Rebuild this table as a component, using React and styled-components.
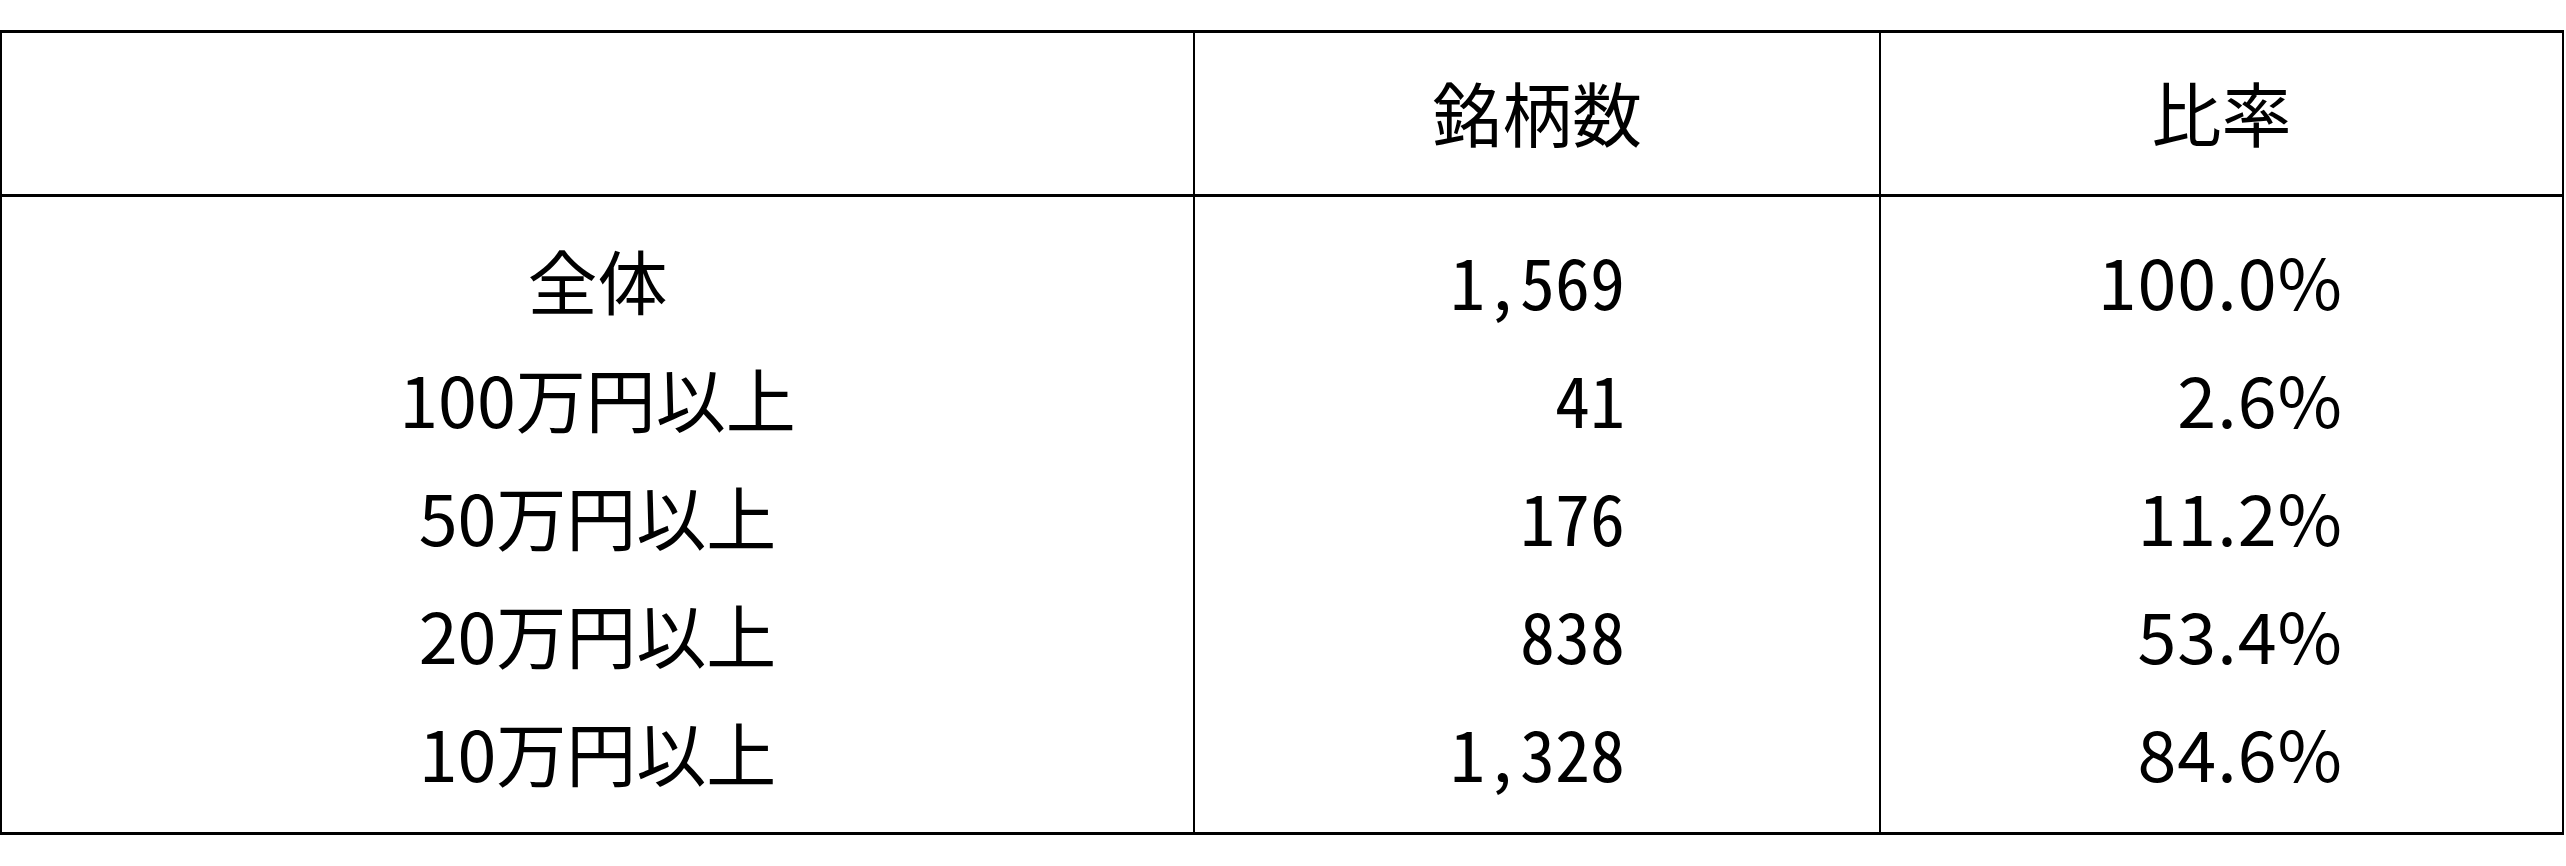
import React from 'react';
import styled, {createGlobalStyle} from 'styled-components';

const GlobalStyle = createGlobalStyle`
  html, body {
    margin: 0;
    padding: 0;
    background: #fff;
  }
`;

const rows = [
    {label: '全体', count: '1,569', ratio: '100.0%'},
    {label: '100万円以上', count: '41', ratio: '2.6%'},
    {label: '50万円以上', count: '176', ratio: '11.2%'},
    {label: '20万円以上', count: '838', ratio: '53.4%'},
    {label: '10万円以上', count: '1,328', ratio: '84.6%'},
];

const Sheet = styled.div`
  padding-top: 30px;
  width: 2566px;
`;

const Table = styled.div`
  width: 2564px;
  box-sizing: border-box;
  border-top: 3px solid #000;
  border-bottom: 3px solid #000;
  border-left: 2px solid #000;
  border-right: 2px solid #000;
  font-family: "Noto Sans CJK JP", "Noto Sans", sans-serif;
  font-size: 70px;
  color: #000;
`;

const Grid = styled.div`
  display: grid;
  grid-template-columns: 1191px 686px 1fr;
`;

const HeaderRow = styled(Grid)`
  height: 161px;
  border-bottom: 3px solid #000;
`;

const HeadCell = styled.div`
  display: flex;
  align-items: center;
  justify-content: center;
  box-sizing: border-box;
  border-left: ${p => (p.$first ? 'none' : '2px solid #000')};
  padding-bottom: 4px;
`;

const Body = styled(Grid)`
  height: 635px;
`;

const Column = styled.div`
  display: flex;
  flex-direction: column;
  box-sizing: border-box;
  padding-top: 23px;
  border-left: ${p => (p.$first ? 'none' : '2px solid #000')};
`;

const Cell = styled.div`
  height: 118px;
  display: flex;
  align-items: center;
  justify-content: ${p => p.$align || 'center'};
  padding-right: ${p => p.$pad || 0}px;
  white-space: pre;
`;

const Count = styled.span`
  font-feature-settings: "hwid";
`;

const Ratio = styled.span`
  letter-spacing: 1px;
`;

const App = () => {
    return (
        <>
            <GlobalStyle/>
            <Sheet>
                <Table>
                    <HeaderRow>
                        <HeadCell $first/>
                        <HeadCell>銘柄数</HeadCell>
                        <HeadCell>比率</HeadCell>
                    </HeaderRow>
                    <Body>
                        <Column $first>
                            {rows.map(r => <Cell key={r.label}>{r.label}</Cell>)}
                        </Column>
                        <Column>
                            {rows.map(r => (
                                <Cell key={r.label} $align="flex-end" $pad={254}>
                                    <Count>{r.count}</Count>
                                </Cell>
                            ))}
                        </Column>
                        <Column>
                            {rows.map(r => (
                                <Cell key={r.label} $align="flex-end" $pad={219}>
                                    <Ratio>{r.ratio}</Ratio>
                                </Cell>
                            ))}
                        </Column>
                    </Body>
                </Table>
            </Sheet>
        </>
    );
};

export default App;
